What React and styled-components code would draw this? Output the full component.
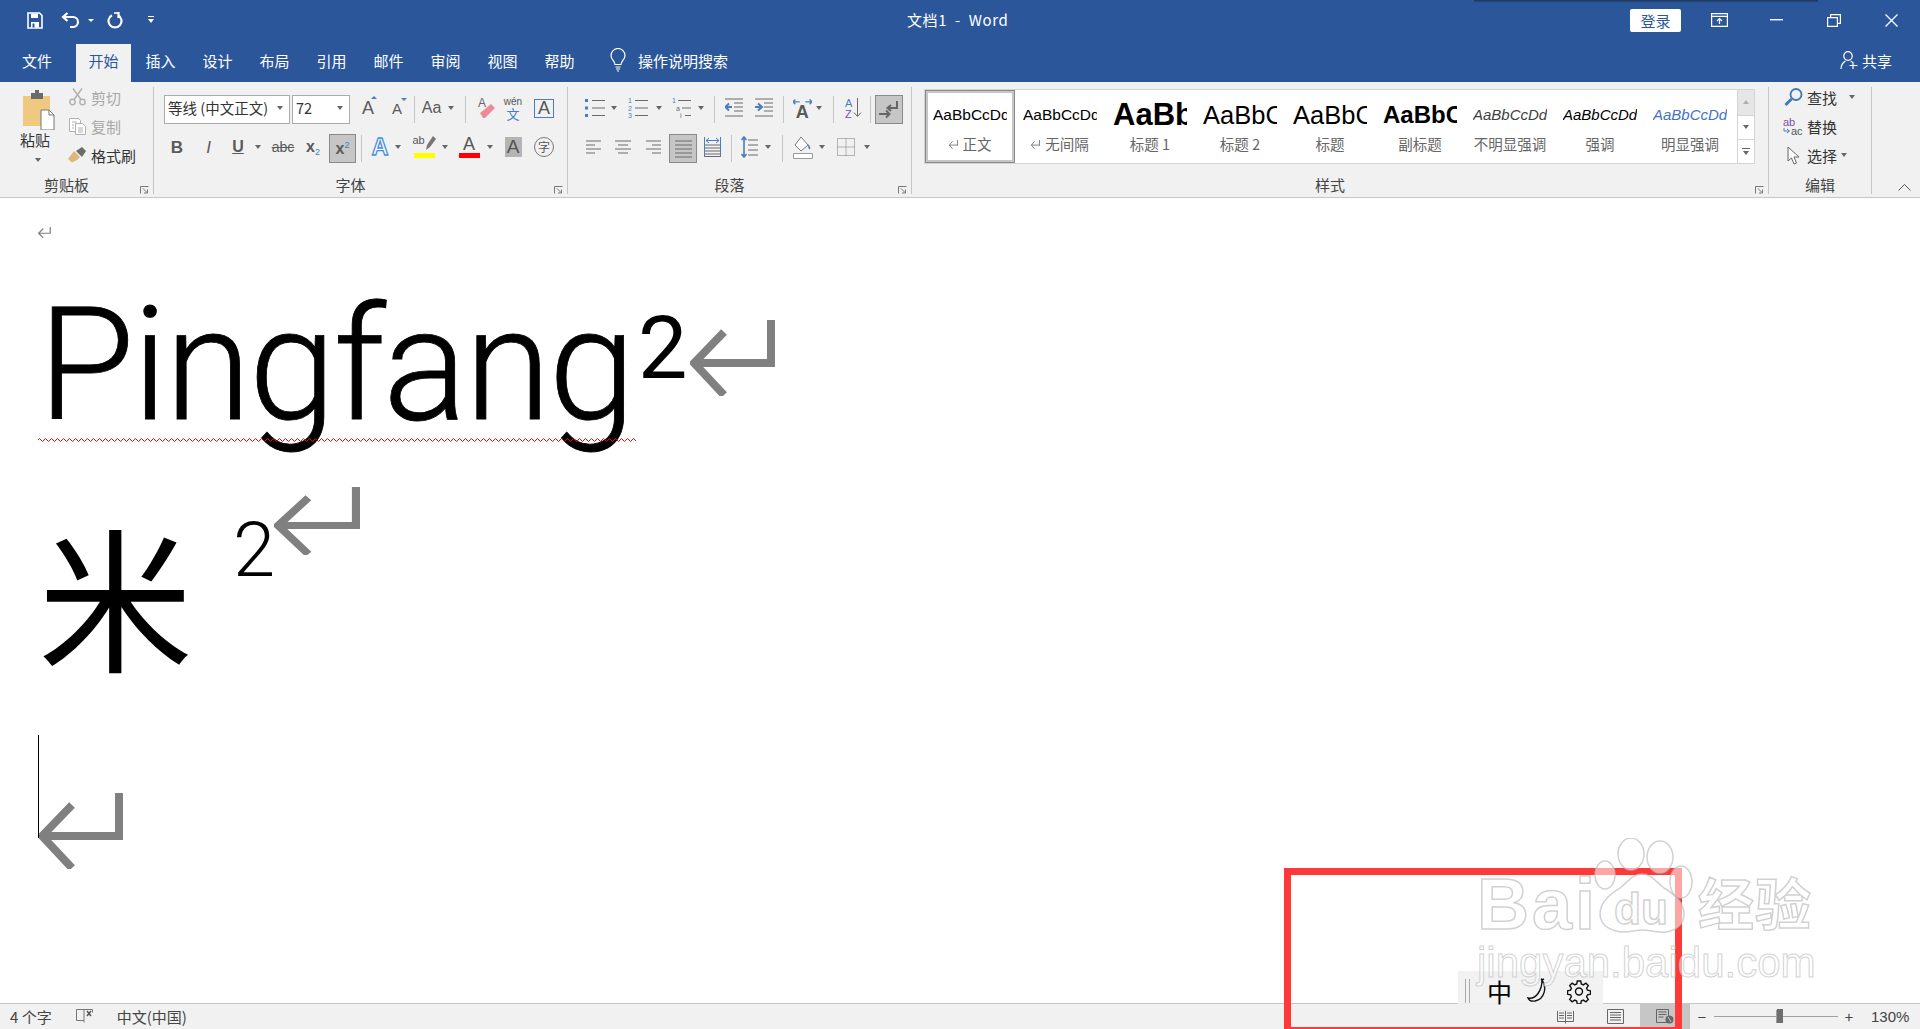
import React from 'react';
import styled, { createGlobalStyle } from 'styled-components';

const Global = createGlobalStyle`
  html, body {
    margin: 0;
    padding: 0;
    background: #fff;
  }
  body {
    font-family: 'Noto Sans CJK SC', 'Liberation Sans', sans-serif;
    color: #444;
  }
`;

const latin = `'Liberation Sans', 'Noto Sans CJK SC', sans-serif`;

const Page = styled.div`
  position: relative;
  display: flex;
  flex-direction: column;
  width: 1920px;
  height: 1029px;
  overflow: hidden;
`;

/* title bar */

const TitleBar = styled.div`
  position: relative;
  display: flex;
  align-items: center;
  height: 44px;
  flex: none;
  padding-bottom: 4px;
  box-sizing: border-box;
  background: #2b579a;
  color: #fff;
`;

const TopShadow = styled.div`
  position: absolute;
  left: 1474px;
  top: 0;
  width: 344px;
  height: 3px;
  background: linear-gradient(#1d3557, rgba(29, 53, 87, 0));
`;

const Quick = styled.div`
  display: flex;
  align-items: center;
  width: 907px;
  padding-left: 27px;
  box-sizing: border-box;
`;

const QuickSlot = styled.div`
  display: flex;
  align-items: center;
  margin-left: ${(p) => p.$ml || 0}px;
`;

const WhiteCaret = styled.i`
  width: 0;
  height: 0;
  border: 3px solid transparent;
  border-top: 3px solid #fff;
  border-bottom: 0;
`;

const DocTitle = styled.div`
  width: 723px;
  margin-bottom: 2px;
  font-size: 15px;
  letter-spacing: 0.6px;
  white-space: pre;
`;

const SignIn = styled.div`
  width: 51px;
  height: 23px;
  background: #fff;
  border-radius: 2px;
  color: #2b579a;
  font-size: 15px;
  line-height: 23px;
  text-align: center;
`;

const WinButton = styled.div`
  display: flex;
  align-items: center;
  justify-content: center;
  width: ${(p) => p.$w}px;
  margin-left: ${(p) => p.$ml || 0}px;
`;

/* tabs */

const TabRow = styled.div`
  display: flex;
  align-items: stretch;
  height: 38px;
  flex: none;
  padding-left: 4px;
  background: #2b579a;
  color: #fff;
  font-size: 15px;
`;

const Tab = styled.div`
  display: flex;
  align-items: center;
  justify-content: center;
  width: ${(p) => p.$w || 55}px;
  margin: 0 ${(p) => p.$mr || 1}px 0 1px;
  padding-bottom: 6px;
  box-sizing: border-box;
  background: ${(p) => (p.$active ? '#f1f1f1' : 'transparent')};
  color: ${(p) => (p.$active ? '#2b579a' : '#fff')};
`;

const SearchTab = styled.div`
  display: flex;
  align-items: center;
  gap: 12px;
  margin-left: 22px;
  padding-bottom: 6px;
`;

const Share = styled.div`
  display: flex;
  align-items: center;
  gap: 4px;
  margin-left: auto;
  margin-right: 28px;
  padding-bottom: 6px;
`;

/* ribbon */

const Ribbon = styled.div`
  display: flex;
  align-items: flex-start;
  height: 115px;
  flex: none;
  background: #f1f1f1;
  border-bottom: 1px solid #c6c6c6;
  font-size: 15px;
  color: #444;
`;

const Group = styled.section`
  display: flex;
  flex-direction: column;
  width: ${(p) => p.$w}px;
  height: 107px;
  margin-top: 5px;
  border-right: 1px solid #c6c6c6;
  box-sizing: border-box;
`;

const GroupBody = styled.div`
  flex: 1;
  display: flex;
  min-height: 0;
`;

const GroupLabel = styled.div`
  display: grid;
  grid-template-columns: minmax(0, 1fr) auto minmax(0, 1fr);
  height: 15px;
  margin-bottom: 3px;
  line-height: 18px;
  color: #444;
  text-align: center;
`;

const Launcher = styled.svg`
  justify-self: end;
  grid-column: 3;
  margin: 10px 4px 0 0;
`;

const LabelText = styled.span`
  grid-column: 2;
  margin-right: ${(p) => p.$shift || 0}px;
`;

const PasteCol = styled.div`
  display: flex;
  flex-direction: column;
  width: 67px;
  padding: 3px 0 0 20px;
  box-sizing: border-box;
  color: #333;
`;

const PasteIcon = styled.div`
  height: 40px;
  margin-left: 2px;
`;

const PasteText = styled.div`
  line-height: 19px;
`;

const SmallCol = styled.div`
  display: flex;
  flex-direction: column;
  gap: 3px;
  margin-top: -3px;
  margin-left: ${(p) => p.$ml || 0}px;
`;

const SmallRow = styled.div`
  display: flex;
  align-items: center;
  height: 26px;
  color: ${(p) => (p.$off ? '#a8a8a8' : '#333')};
`;

const SmallIcon = styled.div`
  display: flex;
  justify-content: center;
  width: 20px;
  margin-right: 4px;
`;

const Caret = styled.i`
  display: block;
  flex: none;
  width: 0;
  height: 0;
  margin-left: ${(p) => p.$ml || 0}px;
  margin-top: ${(p) => p.$mt || 0}px;
  border: 3.5px solid transparent;
  border-top: 4px solid #666;
  border-bottom: 0;
`;

const ToolRows = styled.div`
  display: flex;
  flex-direction: column;
  gap: 10px;
  padding: 8px 0 0 10px;
`;

const ToolRow = styled.div`
  display: flex;
  align-items: center;
  height: 29px;
`;

const Slot = styled.div`
  display: flex;
  align-items: center;
  justify-content: center;
  flex: none;
  width: ${(p) => p.$w}px;
  height: 100%;
  margin-left: ${(p) => p.$ml || 0}px;
  padding-bottom: ${(p) => (p.$pressed ? 0 : 3)}px;
  box-sizing: border-box;
  ${(p) => p.$pressed && 'background: #c6c6c6; border: 1px solid #8a8a8a;'}
`;

const Sep = styled.div`
  display: flex;
  justify-content: center;
  flex: none;
  width: ${(p) => p.$w}px;
  height: 27px;
  &::before {
    content: '';
    width: 1px;
    background: #c6c6c6;
  }
`;

const FontBox = styled.div`
  display: flex;
  align-items: center;
  justify-content: space-between;
  width: ${(p) => p.$w}px;
  height: 29px;
  margin-right: ${(p) => p.$mr || 0}px;
  padding: 0 6px 4px 3px;
  box-sizing: border-box;
  background: #fff;
  border: 1px solid #ababab;
  color: #333;
  font-size: 14.5px;
  white-space: nowrap;
`;

const Glyph = styled.span`
  position: relative;
  font-family: ${latin};
  font-size: ${(p) => p.$size || 16}px;
  font-weight: ${(p) => (p.$bold ? 700 : 400)};
  font-style: ${(p) => (p.$italic ? 'italic' : 'normal')};
  text-decoration: ${(p) => p.$deco || 'none'};
  color: ${(p) => p.$color || '#5a5a5a'};
  line-height: 1;
  white-space: nowrap;
  sub, sup {
    font-size: 9px;
    color: #4a7ebb;
    font-weight: 400;
    vertical-align: baseline;
    position: relative;
  }
  sub { top: 3px; }
  sup { top: -6px; }
`;

const SizeArrow = styled.i`
  position: absolute;
  left: 9px;
  top: -3px;
  border: 3px solid transparent;
  ${(p) => (p.$down ? 'border-top: 3px solid #4a7ebb; border-bottom: 0;' : 'border-bottom: 3px solid #4a7ebb; border-top: 0;')}
`;

const Pinyin = styled.div`
  display: flex;
  flex-direction: column;
  align-items: center;
  font-size: 10px;
  line-height: 10px;
  color: #555;
  font-family: ${latin};
  b {
    font-weight: 400;
    font-size: 13px;
    line-height: 13px;
    color: #4a7ebb;
    font-family: 'Noto Sans CJK SC', sans-serif;
  }
`;

const BoxA = styled.div`
  display: flex;
  align-items: center;
  justify-content: center;
  width: 20px;
  height: 19px;
  border: 1px solid #4a7ebb;
  box-sizing: border-box;
  font-family: ${latin};
  font-size: 18px;
  color: #555;
`;

const BarA = styled.div`
  display: flex;
  flex-direction: column;
  align-items: center;
  width: 21px;
  font-family: ${latin};
  font-size: 18px;
  line-height: 16px;
  color: #555;
  &::after {
    content: '';
    align-self: stretch;
    height: 5px;
    background: ${(p) => p.$bar};
    margin-top: 1px;
  }
`;

const HighlightTop = styled.div`
  display: flex;
  align-items: flex-start;
  height: 16px;
  font-size: 11px;
  line-height: 9px;
`;

const ShadeA = styled.div`
  width: 17px;
  height: 20px;
  background: #b4b4b4;
  text-align: center;
  font-family: ${latin};
  font-size: 19px;
  line-height: 20px;
  color: #555;
`;

const OutlineA = styled.span`
  font-family: ${latin};
  font-weight: 700;
  font-size: 23px;
  line-height: 1;
  color: #fff;
  -webkit-text-stroke: 1.3px #4a8fd8;
`;

const RingChar = styled.div`
  width: 18px;
  height: 18px;
  border: 1px solid #777;
  border-radius: 50%;
  font-size: 12px;
  line-height: 17px;
  text-align: center;
  color: #555;
`;

/* style gallery */

const Gallery = styled.div`
  display: flex;
  width: 831px;
  height: 75px;
  margin: 2px 0 0 12px;
  background: #fff;
  border: 1px solid #d4d4d4;
  box-sizing: border-box;
`;

const StyleItem = styled.div`
  display: flex;
  flex-direction: column;
  align-items: center;
  width: 90px;
  flex: none;
  height: 73px;
  box-sizing: border-box;
  ${(p) => p.$selected && 'border: 3px solid #c6c6c6; outline: 1px solid #8a8a8a; outline-offset: -1px;'}
`;

const Sample = styled.div`
  width: 74px;
  height: 40px;
  margin-top: ${(p) => (p.$selected ? 1 : 4)}px;
  overflow: hidden;
  font-family: ${latin};
  font-size: ${(p) => p.$size || 16}px;
  font-weight: ${(p) => (p.$bold ? 700 : 400)};
  font-style: ${(p) => (p.$italic ? 'italic' : 'normal')};
  line-height: 42px;
  color: ${(p) => p.$color || '#000'};
  white-space: nowrap;
`;

const Caption = styled.div`
  display: flex;
  align-items: center;
  justify-content: center;
  gap: 5px;
  font-size: 14.5px;
  line-height: 20px;
  color: #666;
  white-space: nowrap;
`;

const Scroller = styled.div`
  display: flex;
  flex-direction: column;
  width: 18px;
  margin-left: 2px;
  border-left: 1px solid #d4d4d4;
  box-sizing: border-box;
`;

const ScrollStep = styled.div`
  flex: ${(p) => p.$flex || 1};
  display: flex;
  flex-direction: column;
  align-items: center;
  justify-content: center;
  gap: 2px;
  background: ${(p) => (p.$off ? '#e6e6e6' : '#fff')};
  & + & {
    border-top: 1px solid #d4d4d4;
  }
`;

const ScrollCaret = styled.i`
  border: 3px solid transparent;
  ${(p) => (p.$up ? 'border-bottom: 4px solid #b0b0b0; border-top: 0;' : 'border-top: 4px solid #666; border-bottom: 0;')}
`;

const ScrollBar = styled.i`
  width: 8px;
  height: 1px;
  background: #666;
`;

const CollapseSlot = styled.div`
  align-self: flex-end;
  margin: 0 0 2px 26px;
`;

/* document */

const Doc = styled.main`
  flex: 1;
  min-height: 0;
  padding: 29px 0 0 38px;
  background: #fff;
`;

const TinyMark = styled.div`
  height: 11px;
  line-height: 0;
`;

const DocLine = styled.div`
  position: relative;
  display: flex;
  align-items: flex-start;
  height: ${(p) => p.$h}px;
`;

const BigWord = styled.div`
  width: ${(p) => p.$w}px;
  flex: none;
  margin-top: ${(p) => p.$mt}px;
  box-sizing: border-box;
  font-family: ${(p) => (p.$cjk ? `'Noto Sans CJK SC', sans-serif` : 'Roboto, sans-serif')};
  font-weight: ${(p) => (p.$cjk ? 400 : 300)};
  font-size: ${(p) => p.$size}px;
  letter-spacing: ${(p) => p.$ls || 0}px;
  -webkit-text-stroke: ${(p) => (p.$cjk ? 0 : 0.8)}px #000;
  line-height: 1;
  color: #000;
  white-space: nowrap;
`;

const Super = styled.div`
  width: ${(p) => p.$w}px;
  flex: none;
  margin-top: ${(p) => p.$mt}px;
  font-family: Roboto, sans-serif;
  font-weight: ${(p) => p.$weight || 400};
  font-size: ${(p) => p.$size}px;
  line-height: 1;
  color: #000;
`;

const MarkWrap = styled.div`
  margin-top: ${(p) => p.$mt}px;
  flex: none;
  line-height: 0;
`;

const Spell = styled.svg`
  position: absolute;
  left: 0;
  top: ${(p) => p.$top}px;
`;

const Cursor = styled.div`
  position: absolute;
  left: 0;
  top: 0;
  width: 1px;
  height: 103px;
  background: #000;
`;

/* status bar */

const StatusBar = styled.footer`
  display: flex;
  align-items: center;
  height: 26px;
  flex: none;
  padding-left: 10px;
  background: #f1f1f1;
  border-top: 1px solid #c6c6c6;
  box-sizing: border-box;
  font-size: 15px;
  color: #444;
`;

const StatusText = styled.span`
  margin-left: ${(p) => p.$ml || 0}px;
  line-height: 22px;
`;

const StatusRight = styled.div`
  display: flex;
  align-items: center;
  height: 100%;
  margin-left: auto;
  padding-right: 11px;
`;

const ViewSlot = styled.div`
  display: flex;
  align-items: center;
  justify-content: center;
  width: ${(p) => p.$w || 50}px;
  height: 100%;
  background: ${(p) => (p.$active ? '#c6c6c6' : 'transparent')};
`;

const ZoomTrack = styled.div`
  position: relative;
  width: 124px;
  height: 1px;
  background: #a0a0a0;
  &::before {
    content: '';
    position: absolute;
    left: 62px;
    top: -6px;
    width: 1px;
    height: 13px;
    background: #a0a0a0;
  }
`;

const ZoomThumb = styled.i`
  position: absolute;
  left: 63px;
  top: -7px;
  width: 6px;
  height: 14px;
  background: #6e6e6e;
`;

const ZoomPct = styled.span`
  margin-left: 11px;
  width: 38px;
  font-family: ${latin};
  font-size: 15px;
`;

/* things that lie over the page */

const RedFrame = styled.div`
  position: absolute;
  left: 1284px;
  top: 868px;
  width: 398px;
  height: 161px;
  border: 7px solid #ff3838;
  border-bottom-width: 2px;
  box-sizing: border-box;
`;

const ImeBar = styled.div`
  position: absolute;
  left: 1458px;
  top: 971px;
  display: flex;
  align-items: center;
  width: 145px;
  height: 40px;
  background: rgba(241, 241, 241, 0.92);
`;

const ImeGrip = styled.i`
  width: 3px;
  height: 24px;
  margin-left: 7px;
  border-left: 1px solid #aaa;
  border-right: 1px solid #aaa;
`;

const ImeChar = styled.span`
  margin-left: 17px;
  font-size: 25px;
  line-height: 1;
  color: #000;
`;

const Watermark = styled.div`
  position: absolute;
  left: 1477px;
  top: 838px;
  display: flex;
  flex-direction: column;
  color: rgba(255, 255, 255, 0.55);
  -webkit-text-stroke: 1.5px rgba(190, 190, 190, 0.7);
`;

const MarkRow = styled.div`
  display: flex;
  align-items: flex-end;
  height: 96px;
`;

const MarkBai = styled.span`
  width: 117px;
  margin-bottom: -3px;
  font-family: ${latin};
  font-weight: 700;
  font-size: 72px;
  line-height: 66px;
  letter-spacing: 3px;
`;

const MarkCn = styled.span`
  margin: 0 0 3px -4px;
  font-family: 'Noto Sans CJK SC', sans-serif;
  font-weight: 700;
  font-size: 56px;
  line-height: 60px;
  letter-spacing: 1px;
  white-space: nowrap;
`;

const MarkUrl = styled.div`
  margin-top: 7px;
  font-family: ${latin};
  font-size: 42px;
  line-height: 44px;
  -webkit-text-stroke-width: 1px;
`;

/* drawings */

const ReturnMark = ({ w = 86, h = 76, tip = 43, color = '#808080' }) => (
  <svg width={w} height={h} viewBox="0 0 86 76" preserveAspectRatio="none">
    <path d={`M81 0V${tip + 4}M85 ${tip}H4M34 12L4 ${tip}L34 75`} fill="none" stroke={color} strokeWidth="8" />
  </svg>
);

const SaveIcon = () => (
  <svg width="16" height="17" viewBox="0 0 16 17" fill="none" stroke="#fff">
    <path d="M1 1h11.5L15 3.5V16H1z" strokeWidth="1.6" />
    <path d="M4 1.5h7V6H4zM4 10h8v5.5H4z" fill="#fff" stroke="none" />
    <path d="M5.5 11.5h2v4h-2z" fill="#2b579a" stroke="none" />
  </svg>
);

const UndoIcon = () => (
  <svg width="19" height="16" viewBox="0 0 19 16" fill="none" stroke="#fff" strokeWidth="2.2">
    <path d="M6.5 1L2 5l4.5 4M2 5h10a5 5 0 0 1 0 10H9" />
  </svg>
);

const RedoIcon = () => (
  <svg width="16" height="17" viewBox="0 0 16 17" fill="none" stroke="#fff" strokeWidth="2.2">
    <path d="M5 3.2a6.5 6.5 0 1 0 6 0" />
    <path d="M11.5 0v6" />
    <path d="M11 1H7" strokeWidth="1.6" />
  </svg>
);

const CustomizeIcon = () => (
  <svg width="6" height="8" viewBox="0 0 6 8" fill="#fff">
    <path d="M0 0h6v1H0zM0 3h6L3 7z" />
  </svg>
);

const WinDisplayIcon = () => (
  <svg width="17" height="14" viewBox="0 0 17 14" fill="none" stroke="#fff" strokeWidth="1.2">
    <path d="M.6.6h15.8v12.8H.6zM.6 3.4h15.8" />
    <path d="M8.5 11V5.5M6 8l2.5-2.5L11 8" />
  </svg>
);

const WinMinIcon = () => (
  <svg width="13" height="2" viewBox="0 0 13 2"><path d="M0 0h13v1.4H0z" fill="#fff" /></svg>
);

const WinRestoreIcon = () => (
  <svg width="14" height="13" viewBox="0 0 14 13" fill="none" stroke="#fff" strokeWidth="1.2">
    <path d="M.6 3.6h9.8v8.8H.6zM3.6 3.4V.6h9.8v8.8h-3" />
  </svg>
);

const WinCloseIcon = () => (
  <svg width="13" height="13" viewBox="0 0 13 13" stroke="#fff" strokeWidth="1.3">
    <path d="M.5.5l12 12M12.5.5l-12 12" />
  </svg>
);

const BulbIcon = () => (
  <svg width="16" height="24" viewBox="0 0 16 24" fill="none" stroke="#fff" strokeWidth="1.2">
    <path d="M5 16.5C5 13 1 11.5 1 7.5a7 7 0 0 1 14 0c0 4-4 5.5-4 9z" />
    <path d="M5.5 19h5M6 21h4M7 23h2" />
  </svg>
);

const ShareIcon = () => (
  <svg width="18" height="18" viewBox="0 0 18 18" fill="none" stroke="#fff" strokeWidth="1.2">
    <ellipse cx="8" cy="5" rx="4.2" ry="4.4" />
    <path d="M1 18c0-4 2-6.5 4.5-8M10.5 10c1 .4 1.7 1 2.3 1.7M13 11v7M9.5 14.5h8" />
  </svg>
);

const ClipboardIcon = () => (
  <svg width="34" height="40" viewBox="0 0 34 40">
    <path d="M1 6h27v30H1z" fill="#efc97f" />
    <path d="M9 3h4V0h4v3h4v6H9z" fill="#6b6b6b" />
    <path d="M19 20h8l5 5v15H19z" fill="#fff" stroke="#777" />
    <path d="M27 20v5h5" fill="none" stroke="#777" />
  </svg>
);

const ScissorsIcon = () => (
  <svg width="17" height="18" viewBox="0 0 17 18" fill="none" stroke="#b0b0b0" strokeWidth="1.4">
    <circle cx="3.5" cy="14" r="2.7" />
    <circle cx="13.5" cy="14" r="2.7" />
    <path d="M5 11.5L13 .5M12 11.5L4 .5" />
  </svg>
);

const CopyIcon = () => (
  <svg width="17" height="17" viewBox="0 0 17 17" fill="#fff" stroke="#b0b0b0">
    <path d="M.5.5h9l2 2v11H.5z" />
    <path d="M6.5 5.5h7l3 3v8h-10z" />
    <path d="M3 4h5M3 7h2M3 10h2M9 10h5M9 12h5M9 14h5" fill="none" />
  </svg>
);

const BrushIcon = () => (
  <svg width="18" height="16" viewBox="0 0 18 16">
    <path d="M6 4l6 6-3 3-5 2.5L0 12z" fill="#dcb87a" />
    <path d="M8 4l6-4 4 4-4 6z" fill="#6b6b6b" />
  </svg>
);

const EraserIcon = () => (
  <svg width="19" height="22" viewBox="0 0 19 22">
    <path d="M3 16l11-9 4 4-10 10H6z" fill="#ec8b98" />
    <text x="1" y="10" fontSize="12" fontFamily="Liberation Sans" fill="#666">A</text>
  </svg>
);

const PenIcon = () => (
  <svg width="11" height="15" viewBox="0 0 11 15">
    <path d="M8 0l3 3-6 8-4 3 1-5z" fill="#777" />
  </svg>
);

const linesProps = { fill: 'none', stroke: '#6a6a6a', strokeWidth: 1 };

const ListIcon = ({ kind }) => (
  <svg width="22" height="22" viewBox="0 0 22 22">
    <path d="M8 3.5h13M8 11h13M8 18.5h13" {...linesProps} />
    {kind === 'dots' && <path d="M1 2h3v3H1zM1 9.5h3v3H1zM1 17h3v3H1z" fill="#4a7ebb" />}
    {kind === 'nums' && (
      <text fontSize="7" fontFamily="Liberation Sans" fill="#4a7ebb">
        <tspan x="1" y="6">1</tspan>
        <tspan x="1" y="13.5">2</tspan>
        <tspan x="1" y="21">3</tspan>
      </text>
    )}
  </svg>
);

const MultiListIcon = () => (
  <svg width="20" height="22" viewBox="0 0 20 22">
    <path d="M6 3.5h13M10 11h9M13 18.5h6" {...linesProps} />
    <text fontSize="7" fontFamily="Liberation Sans" fill="#4a7ebb">
      <tspan x="0" y="6">1</tspan>
      <tspan x="4" y="13.5" fill="#666">a</tspan>
      <tspan x="8" y="21" fill="#666">i</tspan>
    </text>
  </svg>
);

const IndentIcon = ({ more }) => (
  <svg width="18" height="20" viewBox="0 0 18 20">
    <path d="M0 1h18M9 5h9M9 9h9M9 13h9M0 18h18" {...linesProps} />
    <path d={more ? 'M0 9h6M3 5.5L7 9l-4 3.5' : 'M7 9H1M4 5.5L.5 9 4 12.5'} fill="none" stroke="#4a7ebb" strokeWidth="2" />
  </svg>
);

const DirectionIcon = () => (
  <svg width="20" height="21" viewBox="0 0 20 21">
    <path d="M0 3.5h7M2.5 1L0 3.5 2.5 6M20 3.5h-7M17.5 1L20 3.5 17.5 6" fill="none" stroke="#4a7ebb" strokeWidth="1.5" />
    <text x="3" y="20" fontSize="19" fontWeight="700" fontFamily="Liberation Sans" fill="#5a5a5a">A</text>
  </svg>
);

const SortIcon = () => (
  <svg width="17" height="20" viewBox="0 0 17 20">
    <text fontSize="11" fontFamily="Liberation Sans">
      <tspan x="0" y="9" fill="#4a7ebb">A</tspan>
      <tspan x="0" y="19.5" fill="#7b4fa8">Z</tspan>
    </text>
    <path d="M12.5 0v18M9 14.5l3.5 4 3.5-4" fill="none" stroke="#6a6a6a" />
  </svg>
);

const MarksIcon = () => (
  <svg width="20" height="20" viewBox="0 0 20 20" fill="none" stroke="#666" strokeWidth="2">
    <path d="M18 1v7H9M12 5L8.5 8l3.5 3" />
    <path d="M0 14h10M7 10.5l3.5 3.5L7 17.5" />
  </svg>
);

const AlignIcon = ({ kind, w = 15 }) => {
  const rows = {
    left: 'M0 1h15M0 5h9M0 9h15M0 13h9',
    center: 'M0 1h16M3 5h10M0 9h16M3 13h10',
    right: 'M0 1h15M6 5h9M0 9h15M6 13h9',
    full: 'M0 1h17M0 5h17M0 9h17M0 13h17M0 17h17',
  };
  return (
    <svg width={w} height={kind === 'full' ? 18 : 14}>
      <path d={rows[kind]} {...linesProps} />
    </svg>
  );
};

const DistributeIcon = () => (
  <svg width="17" height="20" viewBox="0 0 17 20">
    <path d="M0 8h17M0 11h17M0 14h17M0 17h17M0 19.5h17" {...linesProps} />
    <path d="M.5 0v20M16.5 0v20" fill="none" stroke="#4a7ebb" />
    <path d="M2 3.5h13M5 1L2 3.5 5 6M12 1l3 2.5L12 6" fill="none" stroke="#4a7ebb" />
  </svg>
);

const SpacingIcon = () => (
  <svg width="17" height="22" viewBox="0 0 17 22">
    <path d="M7 4h10M7 9h10M7 14h10M7 19h10" {...linesProps} />
    <path d="M3 1v20M.5 4L3 1l2.5 3M.5 18L3 21l2.5-3" fill="none" stroke="#4a7ebb" strokeWidth="1.6" />
  </svg>
);

const BucketIcon = () => (
  <svg width="20" height="23" viewBox="0 0 20 23">
    <path d="M8 1L2 9l6 6 7-6z" fill="#fff" stroke="#777" />
    <path d="M15 8c2 2 3 4 2 5s-2-1-2-5z" fill="#4a7ebb" />
    <path d="M.5 17.5h19v5H.5z" fill="#fff" stroke="#999" />
  </svg>
);

const BordersIcon = () => (
  <svg width="18" height="18" viewBox="0 0 18 18" fill="none" stroke="#777" strokeDasharray="1 1">
    <path d="M.5.5h17v17H.5zM9 .5v17M.5 9h17" />
  </svg>
);

const SearchIcon = () => (
  <svg width="19" height="18" viewBox="0 0 19 18" fill="none" stroke="#3f78b5">
    <circle cx="12" cy="6.5" r="5.5" strokeWidth="1.8" />
    <path d="M7.5 11l-6 6" strokeWidth="2.8" />
  </svg>
);

const ReplaceIcon = () => (
  <svg width="20" height="18" viewBox="0 0 20 18">
    <text fontSize="11" fontFamily="Liberation Sans">
      <tspan x="0" y="9" fill="#7b4fa8">ab</tspan>
      <tspan x="8" y="17.5" fill="#555">ac</tspan>
    </text>
    <path d="M1 11v3h5M4 12l2.5 2L4 16" fill="none" stroke="#4a7ebb" />
  </svg>
);

const PointerIcon = () => (
  <svg width="13" height="19" viewBox="0 0 13 19" fill="#fff" stroke="#666">
    <path d="M1 1v14l3.5-3 2.5 6 2.5-1-2.5-6h5z" />
  </svg>
);

const ChevronUp = () => (
  <svg width="13" height="7" viewBox="0 0 13 7" fill="none" stroke="#555">
    <path d="M.5 6.5l6-6 6 6" />
  </svg>
);

const LauncherIcon = () => (
  <Launcher width="9" height="8" viewBox="0 0 9 8" fill="none" stroke="#777">
    <path d="M.5 7.5v-7h8M3 2.5l4 4M7.500 3.5v3.5H4" />
  </Launcher>
);

const ProofIcon = () => (
  <svg width="17" height="15" viewBox="0 0 17 15" fill="none" stroke="#777">
    <path d="M8 1.5H.5v11H8zM8 1.5h8.500v3M8 12.5v2" />
    <path d="M11 3l4 5M15 3l-4 5" stroke="#555" strokeWidth="1.5" />
  </svg>
);

const ReadIcon = () => (
  <svg width="17" height="14" viewBox="0 0 17 14" fill="none" stroke="#666">
    <path d="M.5.5h16v11H.5zM8.500.5v13M2 3h5M2 5.5h5M2 8h5M10 3h5M10 5.5h5M10 8h5" />
  </svg>
);

const PrintIcon = () => (
  <svg width="17" height="15" viewBox="0 0 17 15" fill="none" stroke="#666">
    <path d="M.5.5h16v14H.5zM3 3.5h11M3 6h11M3 8.5h11M3 11h11" />
  </svg>
);

const WebIcon = () => (
  <svg width="18" height="15" viewBox="0 0 18 15">
    <path d="M.5.5h12v13H.5zM2.5 3h8M2.5 5.5h8M2.5 8h5" fill="none" stroke="#666" />
    <circle cx="13.5" cy="10.5" r="4" fill="#666" />
    <path d="M12 8l3 5" stroke="#c6c6c6" />
  </svg>
);

const MoonIcon = () => (
  <svg width="24" height="26" viewBox="0 0 24 26" fill="none" stroke="#111" strokeWidth="1.4">
    <path d="M15 2c5 7 3 19-7 21-3 .5-6-.5-7-3 8 2 14-8 14-18z" />
    <path d="M14 1l1 1 2-1" />
  </svg>
);

const GearIcon = () => (
  <svg width="24" height="25" viewBox="0 0 24 24" fill="none" stroke="#111" strokeWidth="1.4">
    <circle cx="12" cy="12" r="3.5" />
    <path d="M10.3 1.5h3.4l.6 3 2 .9 2.6-1.700 2.4 2.4-1.700 2.600.9 2 3 .6v3.400l-3 .6-.9 2 1.700 2.600-2.400 2.400-2.600-1.700-2 .9-.6 3h-3.400l-.6-3-2-.9-2.600 1.700-2.400-2.400 1.700-2.600-.9-2-3-.6v-3.400l3-.6.9-2-1.700-2.600 2.400-2.400 2.600 1.700 2-.9z" />
  </svg>
);

const PawIcon = () => (
  <svg width="108" height="96" viewBox="0 0 108 96" fill="rgba(255,255,255,.55)" stroke="rgba(190,190,190,.7)" strokeWidth="1.5">
    <ellipse cx="37" cy="16" rx="13" ry="16" />
    <ellipse cx="66" cy="19" rx="13" ry="16" />
    <ellipse cx="11" cy="37" rx="10" ry="14" />
    <ellipse cx="87" cy="44" rx="11" ry="16" />
    <path d="M48 36c10 0 14 8 22 14 10 6 20 14 20 26 0 14-14 19-24 18-7-.5-12-2-18-2s-11 2-18 2C20 94 6 89 6 76c0-13 11-20 20-26 8-6 12-14 22-14z" />
    <text x="20" y="86" fontSize="44" fontWeight="700" fontFamily="Liberation Sans">du</text>
  </svg>
);

const styleItems = [
  { name: '无间隔', mark: true, size: 15.5 },
  { name: '标题 1', size: 31, bold: true },
  { name: '标题 2', size: 25.5 },
  { name: '标题', size: 25.5 },
  { name: '副标题', size: 24, bold: true },
  { name: '不明显强调', size: 15, italic: true, color: '#404040' },
  { name: '强调', size: 15, italic: true },
  { name: '明显强调', size: 15, italic: true, color: '#4472c4' },
];

const tabs = ['插入', '设计', '布局', '引用', '邮件', '审阅', '视图', '帮助'];

export default function App() {
  return (
    <Page>
      <Global />

      <TitleBar>
        <TopShadow />
        <Quick>
          <SaveIcon />
          <QuickSlot $ml={18}><UndoIcon /></QuickSlot>
          <QuickSlot $ml={8}><WhiteCaret /></QuickSlot>
          <QuickSlot $ml={13}><RedoIcon /></QuickSlot>
          <QuickSlot $ml={25}><CustomizeIcon /></QuickSlot>
        </Quick>
        <DocTitle>文档1  -  Word</DocTitle>
        <SignIn>登录</SignIn>
        <WinButton $w={17} $ml={30}><WinDisplayIcon /></WinButton>
        <WinButton $w={13} $ml={42}><WinMinIcon /></WinButton>
        <WinButton $w={14} $ml={44}><WinRestoreIcon /></WinButton>
        <WinButton $w={13} $ml={44}><WinCloseIcon /></WinButton>
      </TitleBar>

      <TabRow>
        <Tab $w={64} $mr={6}>文件</Tab>
        <Tab $active>开始</Tab>
        {tabs.map((t) => <Tab key={t}>{t}</Tab>)}
        <SearchTab><BulbIcon />操作说明搜索</SearchTab>
        <Share><ShareIcon />共享</Share>
      </TabRow>

      <Ribbon>
        <Group $w={154}>
          <GroupBody>
            <PasteCol>
              <PasteIcon><ClipboardIcon /></PasteIcon>
              <PasteText>粘贴</PasteText>
              <Caret $ml={15} $mt={9} />
            </PasteCol>
            <SmallCol>
              <SmallRow $off><SmallIcon><ScissorsIcon /></SmallIcon>剪切</SmallRow>
              <SmallRow $off><SmallIcon><CopyIcon /></SmallIcon>复制</SmallRow>
              <SmallRow><SmallIcon><BrushIcon /></SmallIcon>格式刷</SmallRow>
            </SmallCol>
          </GroupBody>
          <GroupLabel><LabelText $shift={20}>剪贴板</LabelText><LauncherIcon /></GroupLabel>
        </Group>

        <Group $w={414}>
          <GroupBody>
            <ToolRows>
              <ToolRow>
                <FontBox $w={126} $mr={2}>等线 (中文正文)<Caret /></FontBox>
                <FontBox $w={58}>72<Caret /></FontBox>
                <Slot $w={30} $ml={3}><Glyph $size={18}>A<SizeArrow /></Glyph></Slot>
                <Slot $w={28}><Glyph $size={15}>A<SizeArrow $down /></Glyph></Slot>
                <Sep $w={6} />
                <Slot $w={29}><Glyph $size={16}>Aa</Glyph></Slot>
                <Slot $w={10}><Caret /></Slot>
                <Sep $w={18} />
                <Slot $w={24}><EraserIcon /></Slot>
                <Slot $w={30}><Pinyin>wén<b>文</b></Pinyin></Slot>
                <Slot $w={32}><BoxA>A</BoxA></Slot>
              </ToolRow>
              <ToolRow>
                <Slot $w={26}><Glyph $bold $size={17}>B</Glyph></Slot>
                <Slot $w={37}><Glyph $italic $size={17}>I</Glyph></Slot>
                <Slot $w={22}><Glyph $bold $size={16} $deco="underline">U</Glyph></Slot>
                <Slot $w={18}><Caret /></Slot>
                <Slot $w={32}><Glyph $size={14} $deco="line-through">abc</Glyph></Slot>
                <Slot $w={28}><Glyph $bold $size={16}>x<sub>2</sub></Glyph></Slot>
                <Slot $w={27} $ml={2} $pressed><Glyph $bold $size={16}>x<sup>2</sup></Glyph></Slot>
                <Sep $w={10} />
                <Slot $w={28}><OutlineA>A</OutlineA></Slot>
                <Slot $w={8}><Caret /></Slot>
                <Slot $w={36} $ml={4}>
                  <BarA $bar="#ffff00">
                    <HighlightTop>ab<PenIcon /></HighlightTop>
                  </BarA>
                </Slot>
                <Slot $w={6}><Caret /></Slot>
                <Slot $w={36} $ml={3}><BarA $bar="#ff0000">A</BarA></Slot>
                <Slot $w={6}><Caret /></Slot>
                <Slot $w={40}><ShadeA>A</ShadeA></Slot>
                <Slot $w={22}><RingChar>字</RingChar></Slot>
              </ToolRow>
            </ToolRows>
          </GroupBody>
          <GroupLabel><LabelText $shift={20}>字体</LabelText><LauncherIcon /></GroupLabel>
        </Group>

        <Group $w={344}>
          <GroupBody>
            <ToolRows>
              <ToolRow>
                <Slot $w={33}><ListIcon kind="dots" /></Slot>
                <Slot $w={6}><Caret /></Slot>
                <Slot $w={36} $ml={3}><ListIcon kind="nums" /></Slot>
                <Slot $w={6}><Caret /></Slot>
                <Slot $w={32} $ml={4}><MultiListIcon /></Slot>
                <Slot $w={6}><Caret /></Slot>
                <Sep $w={21} />
                <Slot $w={18}><IndentIcon /></Slot>
                <Slot $w={18} $ml={12}><IndentIcon more /></Slot>
                <Sep $w={20} />
                <Slot $w={19}><DirectionIcon /></Slot>
                <Slot $w={14}><Caret /></Slot>
                <Sep $w={14} />
                <Slot $w={26}><SortIcon /></Slot>
                <Sep $w={9} />
                <Slot $w={28} $pressed><MarksIcon /></Slot>
              </ToolRow>
              <ToolRow>
                <Slot $w={30}><AlignIcon kind="left" /></Slot>
                <Slot $w={30}><AlignIcon kind="center" w={16} /></Slot>
                <Slot $w={31}><AlignIcon kind="right" /></Slot>
                <Slot $w={28} $pressed><AlignIcon kind="full" w={17} /></Slot>
                <Slot $w={31}><DistributeIcon /></Slot>
                <Sep $w={6} />
                <Slot $w={31}><SpacingIcon /></Slot>
                <Slot $w={6}><Caret /></Slot>
                <Sep $w={22} />
                <Slot $w={20}><BucketIcon /></Slot>
                <Slot $w={18}><Caret /></Slot>
                <Slot $w={30}><BordersIcon /></Slot>
                <Slot $w={12}><Caret /></Slot>
              </ToolRow>
            </ToolRows>
          </GroupBody>
          <GroupLabel><LabelText $shift={20}>段落</LabelText><LauncherIcon /></GroupLabel>
        </Group>

        <Group $w={857}>
          <GroupBody>
            <Gallery>
              <StyleItem $selected>
                <Sample $selected $size={15.5}>AaBbCcDd</Sample>
                <Caption><ReturnMark w={9} h={9} color="#777" />正文</Caption>
              </StyleItem>
              {styleItems.map((s) => (
                <StyleItem key={s.name}>
                  <Sample $size={s.size} $bold={s.bold} $italic={s.italic} $color={s.color}>
                    {s.size > 20 ? 'AaBbC' : 'AaBbCcDd'}
                  </Sample>
                  <Caption>{s.mark && <ReturnMark w={9} h={9} color="#777" />}{s.name}</Caption>
                </StyleItem>
              ))}
              <Scroller>
                <ScrollStep $off $flex={26}><ScrollCaret $up /></ScrollStep>
                <ScrollStep $flex={25}><ScrollCaret /></ScrollStep>
                <ScrollStep $flex={24}><ScrollBar /><ScrollCaret /></ScrollStep>
              </Scroller>
            </Gallery>
          </GroupBody>
          <GroupLabel><LabelText $shift={20}>样式</LabelText><LauncherIcon /></GroupLabel>
        </Group>

        <Group $w={103}>
          <GroupBody>
            <SmallCol $ml={14}>
              <SmallRow><SmallIcon><SearchIcon /></SmallIcon>查找<Caret $ml={12} /></SmallRow>
              <SmallRow><SmallIcon><ReplaceIcon /></SmallIcon>替换</SmallRow>
              <SmallRow><SmallIcon><PointerIcon /></SmallIcon>选择<Caret $ml={4} /></SmallRow>
            </SmallCol>
          </GroupBody>
          <GroupLabel><LabelText>编辑</LabelText></GroupLabel>
        </Group>

        <CollapseSlot><ChevronUp /></CollapseSlot>
      </Ribbon>

      <Doc>
        <TinyMark><ReturnMark w={13} h={11} /></TinyMark>

        <DocLine $h={238}>
          <BigWord $w={600} $mt={49} $size={157} $ls={-2.5}>Pingfang</BigWord>
          <Spell $top={200} width="598" height="4">
            <defs>
              <pattern id="wave" width="6" height="4" patternUnits="userSpaceOnUse">
                <path d="M0 2L1.5 .5 3 2l1.5 1.5L6 2" fill="none" stroke="#f00" />
              </pattern>
            </defs>
            <rect width="598" height="4" fill="url(#wave)" />
          </Spell>
          <Super $w={52} $mt={66} $size={88}>2</Super>
          <MarkWrap $mt={82}><ReturnMark /></MarkWrap>
        </DocLine>

        <DocLine $h={259}>
          <BigWord $w={195} $mt={39} $size={155} $cjk>米</BigWord>
          <Super $w={41} $mt={36} $size={76} $weight={300}>2</Super>
          <MarkWrap $mt={11}><ReturnMark w={87} h={68} /></MarkWrap>
        </DocLine>

        <DocLine $h={140}>
          <Cursor />
          <MarkWrap $mt={58}><ReturnMark /></MarkWrap>
        </DocLine>
      </Doc>

      <StatusBar>
        <StatusText>4 个字</StatusText>
        <StatusText $ml={24}><ProofIcon /></StatusText>
        <StatusText $ml={24}>中文(中国)</StatusText>
        <StatusRight>
          <ViewSlot $w={49}><ReadIcon /></ViewSlot>
          <ViewSlot><PrintIcon /></ViewSlot>
          <ViewSlot $active><WebIcon /></ViewSlot>
          <ViewSlot $w={24}>−</ViewSlot>
          <ZoomTrack><ZoomThumb /></ZoomTrack>
          <ViewSlot $w={22}>+</ViewSlot>
          <ZoomPct>130%</ZoomPct>
        </StatusRight>
      </StatusBar>

      <RedFrame />
      <ImeBar>
        <ImeGrip />
        <ImeChar>中</ImeChar>
        <QuickSlot $ml={15}><MoonIcon /></QuickSlot>
        <QuickSlot $ml={16}><GearIcon /></QuickSlot>
      </ImeBar>
      <Watermark>
        <MarkRow>
          <MarkBai>Bai</MarkBai>
          <PawIcon />
          <MarkCn>经验</MarkCn>
        </MarkRow>
        <MarkUrl>jingyan.baidu.com</MarkUrl>
      </Watermark>
    </Page>
  );
}
